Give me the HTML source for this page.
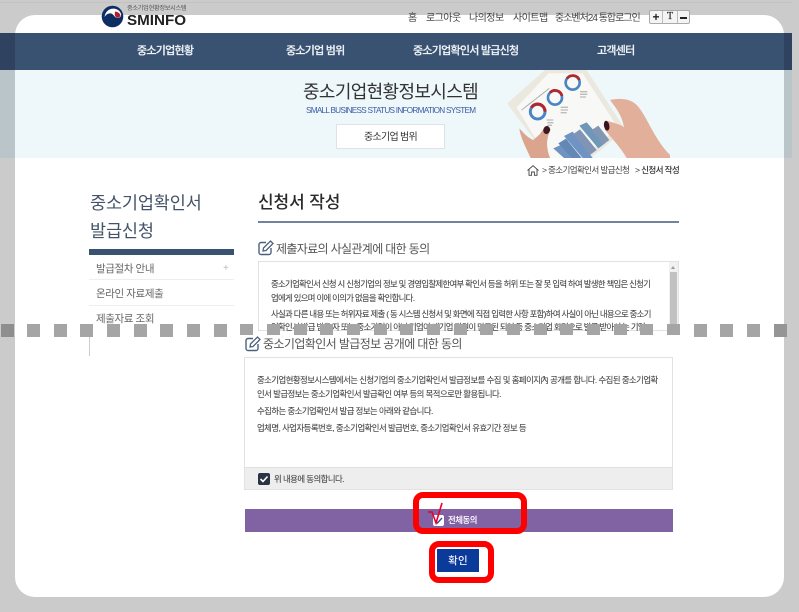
<!DOCTYPE html>
<html lang="ko">
<head>
<meta charset="utf-8">
<title>SMINFO</title>
<style>
html,body{margin:0;padding:0;background:#cbcbcb}
body{width:799px;height:612px;position:relative;overflow:hidden;font-family:"Liberation Sans","Noto Sans CJK KR",sans-serif;color:#333}
#w{position:absolute;left:0;top:0;width:799px;height:612px;background:#cbcbcb;filter:blur(.3px);overflow:hidden}
.a{position:absolute;white-space:nowrap;line-height:1}
.b{position:absolute}
.nav{color:#eef2f6;font-size:11px;font-weight:500;top:46px;letter-spacing:-.75px;-webkit-text-stroke:.2px #eef2f6}
.top{top:14px;font-size:10px;color:#444;letter-spacing:-.55px}
.t{font-size:8.4px;color:#444;letter-spacing:-.53px;-webkit-text-stroke:.1px #555}
.t1{letter-spacing:-.68px}
.side{font-size:10.5px;color:#666;letter-spacing:-.4px;left:96px}
.h{font-size:12px;color:#555;letter-spacing:-.65px}
.sq{position:absolute;top:324px;width:13px;height:13px;background:#a5a5a5}
</style>
</head>
<body>
<div id="w">
<div class="b" style="left:0;top:2px;width:792px;height:1px;background:#c2c2c2"></div>
<div class="b" style="left:15px;top:15px;width:769px;height:582px;background:#fff;border-radius:20px"></div>

<div class="b" style="left:0;top:70px;width:15px;height:88px;background:#b9c5c8"></div>
<div class="b" style="left:784px;top:70px;width:8px;height:88px;background:#b9c5c8"></div>
<div class="b" style="left:15px;top:70px;width:769px;height:88px;background:#eef7fa"></div>
<div class="b" style="left:0;top:33px;width:792px;height:37px;background:#2f4361"></div>
<div class="b" style="left:15px;top:33px;width:769px;height:37px;background:#3a5272"></div>

<!-- logo -->
<svg class="b" style="left:101px;top:5px" width="23" height="23" viewBox="0 0 23 23">
<circle cx="11.5" cy="11.5" r="10.8" fill="#0e2e63"/>
<path d="M3.6 12C4 7 8 3.4 12.5 3.6C16.5 3.8 19.6 6.2 20.2 9.6C20 12 18 13.4 15.6 12.8C13 12 12.6 8.8 9.6 8.4C7 8.2 5 9.6 3.6 12Z" fill="#fff"/>
<path d="M14 6.6C16.4 6.4 18.6 8 19.4 10.2C19 12.4 17 13.2 15.4 12.4C13.6 11.4 13.6 8.8 14 6.6Z" fill="#b3202c"/>
</svg>
<div class="a" style="left:127px;top:6px;font-size:6.2px;color:#555;letter-spacing:-.3px">중소기업현황정보시스템</div>
<div class="a" style="left:127px;top:13px;font-size:15.2px;font-weight:700;color:#222;letter-spacing:0">SMINFO</div>

<!-- top links -->
<div class="a top" style="left:408px">홈</div>
<div class="a top" style="left:426px">로그아웃</div>
<div class="a top" style="left:469px">나의정보</div>
<div class="a top" style="left:513px">사이트맵</div>
<div class="a top" style="left:555px;letter-spacing:-1px">중소벤처24 통합로그인</div>
<div class="b" style="left:649px;top:10px;width:41px;height:14px;border:1px solid #aaa;border-radius:2px;background:#f4f4f4;box-sizing:border-box"></div>
<div class="b" style="left:662px;top:11px;width:1px;height:12px;background:#bbb"></div>
<div class="b" style="left:677px;top:11px;width:1px;height:12px;background:#bbb"></div>
<div class="a" style="left:650px;top:11px;font-size:12px;font-weight:700;color:#222;width:12px;text-align:center">+</div>
<div class="a" style="left:663px;top:12px;font-size:10px;color:#222;font-family:'Liberation Serif',serif;width:14px;text-align:center;-webkit-text-stroke:.2px #222">T</div>
<div class="b" style="left:680px;top:17px;width:7px;height:2px;background:#222"></div>

<!-- nav -->
<div class="a nav" style="left:137px">중소기업현황</div>
<div class="a nav" style="left:286px">중소기업 범위</div>
<div class="a nav" style="left:413px">중소기업확인서 발급신청</div>
<div class="a nav" style="left:597px">고객센터</div>

<!-- banner -->
<div class="a" style="left:303px;top:83px;font-size:18px;color:#333;letter-spacing:-.65px">중소기업현황정보시스템</div>
<div class="a" style="left:306px;top:107px;font-size:8.2px;color:#3a5ba5;letter-spacing:-.73px">SMALL BUSINESS STATUS INFORMATION SYSTEM</div>
<div class="b" style="left:336px;top:124px;width:109px;height:25px;background:#fff;border:1px solid #dfe3e6;box-sizing:border-box"></div>
<div class="a" style="left:336px;top:133px;width:109px;text-align:center;font-size:10px;color:#333;letter-spacing:-.7px">중소기업 범위</div>

<!-- tablet image -->
<svg class="b" style="left:490px;top:70px" width="180" height="88" viewBox="0 30 540 264">
<path d="M52 130L165 30H290L405 208L335 268L300 294H175L130 235L58 140Z" fill="#ebe8df"/>
<path d="M80 142L175 40H278L385 205L320 252L298 294H180L130 225Z" fill="#f8f8f6"/>
<circle cx="143" cy="155" r="22" fill="none" stroke="#4a86c5" stroke-width="9"/>
<path d="M124 143A22 22 0 0 1 165 155" fill="none" stroke="#b5252e" stroke-width="9"/>
<circle cx="195" cy="113" r="21" fill="none" stroke="#4a86c5" stroke-width="8"/>
<path d="M180 98A21 21 0 0 1 216 108" fill="none" stroke="#b5252e" stroke-width="8"/>
<circle cx="248" cy="68" r="21" fill="none" stroke="#4a86c5" stroke-width="8"/>
<path d="M231 56A21 21 0 0 1 268 60" fill="none" stroke="#b5252e" stroke-width="8"/>
<path d="M95 150L178 85" stroke="#888" stroke-width="3" stroke-dasharray="2 1"/>
<path d="M170 180H190M172 188H190M172 196H186M212 142H234M212 150H234M212 158H230M270 95H292M270 103H292M270 111H288" stroke="#bbb" stroke-width="4"/>
<path d="M190 265L212 255L250 294H222Z" fill="#6f93c2"/>
<path d="M205 250L228 236L275 294H246Z" fill="#6488b6"/>
<path d="M222 228L248 215L308 294H278Z" fill="#6f93c2"/>
<path d="M250 222L270 208L320 270L300 285Z" fill="#8094b5"/>
<path d="M268 197L290 187L345 250L325 265Z" fill="#6e97b8"/>
<path d="M305 210L325 197L358 240L338 255Z" fill="#8297b3"/>
<path d="M88 205C92 235 108 262 122 294H180C170 268 166 240 182 208C172 195 160 205 150 222L130 240C112 232 100 218 88 205Z" fill="#dba48d"/>
<ellipse cx="170" cy="210" rx="10" ry="12" fill="#3e1820" transform="rotate(15 170 210)"/>
<path d="M360 120C385 114 420 114 440 135C470 165 490 235 540 285V294H410C390 260 365 235 345 210C340 190 350 180 360 185C375 190 395 195 402 202C396 165 375 140 360 120Z" fill="#e2b09a"/>
<ellipse cx="350" cy="197" rx="8" ry="15" fill="#3a1520" transform="rotate(-10 350 197)"/>
</svg>

<!-- breadcrumb -->
<svg class="b" style="left:527px;top:165px" width="12" height="11" viewBox="0 0 12 11"><path d="M.5 5.5L6 .7L11.5 5.5M2 4.5V10.3H4.6V7H7.4V10.3H10V4.5" fill="none" stroke="#444" stroke-width=".9"/></svg>
<div class="a" style="left:542px;top:166px;font-size:8.6px;color:#444;letter-spacing:-.68px">&gt; 중소기업확인서 발급신청</div>
<div class="a" style="left:635px;top:166px;font-size:8.6px;font-weight:500;color:#333;letter-spacing:-.65px">&gt; 신청서 작성</div>

<!-- sidebar -->
<div class="a" style="left:90px;top:195px;font-size:17.5px;color:#445468;letter-spacing:-.15px">중소기업확인서</div>
<div class="a" style="left:90px;top:223px;font-size:17.5px;color:#445468;letter-spacing:-.15px">발급신청</div>
<div class="b" style="left:89px;top:249px;width:145px;height:6px;background:#3a5272"></div>
<div class="a side" style="top:264px">발급절차 안내</div>
<div class="a" style="left:223px;top:264px;font-size:10px;color:#bbb">+</div>
<div class="b" style="left:89px;top:279px;width:145px;height:1px;background:#eee"></div>
<div class="a side" style="top:289px">온라인 자료제출</div>
<div class="b" style="left:89px;top:305px;width:145px;height:1px;background:#eee"></div>
<div class="a side" style="top:314px">제출자료 조회</div>
<div class="b" style="left:89px;top:330px;width:1px;height:26px;background:#c8ced4"></div>

<!-- title -->
<div class="a" style="left:258px;top:194px;font-size:17px;font-weight:500;color:#2a2a2a;letter-spacing:-.1px">신청서 작성</div>
<div class="b" style="left:258px;top:221px;width:421px;height:2px;background:#72839b"></div>

<!-- section 1 -->
<svg class="b" style="left:258px;top:240px" width="16" height="16" viewBox="0 0 16 16"><path d="M8 2.5H3A2 2 0 0 0 1 4.5V12.5A2 2 0 0 0 3 14.5H11A2 2 0 0 0 13 12.5V8" fill="none" stroke="#4a617f" stroke-width="1.4"/><path d="M5.5 8L12.5 1L15 3.5L8 10.5L5 11Z" fill="none" stroke="#4a617f" stroke-width="1.3"/></svg>
<div class="a h" style="left:276px;top:243px">제출자료의 사실관계에 대한 동의</div>
<div class="b" style="left:258px;top:261px;width:421px;height:70px;border:1px solid #e2e2e2;box-sizing:border-box;background:#fff"></div>
<div class="b" style="left:669px;top:262px;width:9px;height:68px;background:#f1f1f1"></div>
<div class="b" style="left:670px;top:272px;width:7px;height:58px;background:#c1c1c1"></div>
<div class="b" style="left:671px;top:266px;width:0;height:0;border:2.5px solid transparent;border-bottom:3px solid #999;border-top:0"></div>
<div class="a t t1" style="left:271px;top:280px">중소기업확인서 신청 시 신청기업의 정보 및 경영입찰제한여부 확인서 등을 허위 또는 잘 못 입력 하여 발생한 책임은 신청기</div>
<div class="a t t1" style="left:271px;top:294px">업에게 있으며 이에 이의가 없음을 확인합니다.</div>
<div class="a t t1" style="left:271px;top:310px">사실과 다른 내용 또는 허위자료 제출 ( 동 시스템 신청서 및 화면에 직접 입력한 사항 포함)하여 사실이 아닌 내용으로 중소기</div>
<div class="a t t1" style="left:271px;top:323px">업확인서 발급 받을 자 또는 중소기업이 아닌 기업이 대기업 지원이 만료된 되어 등 중소기업 화면으로 발급 받아서 는 기업</div>

<!-- dashes -->
<div class="sq" style="left:1px;background:#8e8e8e"></div>
<div class="sq" style="left:27px"></div><div class="sq" style="left:54px"></div><div class="sq" style="left:80px"></div>
<div class="sq" style="left:107px"></div><div class="sq" style="left:134px"></div><div class="sq" style="left:160px"></div>
<div class="sq" style="left:187px"></div><div class="sq" style="left:214px"></div><div class="sq" style="left:240px"></div>
<div class="sq" style="left:267px"></div><div class="sq" style="left:294px"></div><div class="sq" style="left:320px"></div>
<div class="sq" style="left:347px"></div><div class="sq" style="left:374px"></div><div class="sq" style="left:400px"></div>
<div class="sq" style="left:427px"></div><div class="sq" style="left:454px"></div><div class="sq" style="left:480px"></div>
<div class="sq" style="left:507px"></div><div class="sq" style="left:534px"></div><div class="sq" style="left:560px"></div>
<div class="sq" style="left:587px"></div><div class="sq" style="left:614px"></div><div class="sq" style="left:640px"></div>
<div class="sq" style="left:667px"></div><div class="sq" style="left:694px"></div><div class="sq" style="left:720px"></div>
<div class="sq" style="left:747px"></div><div class="sq" style="left:774px;background:#959595"></div>

<!-- section 2 -->
<div class="b" style="left:240px;top:335px;width:440px;height:22px;background:#fff"></div>
<svg class="b" style="left:245px;top:336px" width="16" height="16" viewBox="0 0 16 16"><path d="M8 2.5H3A2 2 0 0 0 1 4.5V12.5A2 2 0 0 0 3 14.5H11A2 2 0 0 0 13 12.5V8" fill="none" stroke="#4a617f" stroke-width="1.4"/><path d="M5.5 8L12.5 1L15 3.5L8 10.5L5 11Z" fill="none" stroke="#4a617f" stroke-width="1.3"/></svg>
<div class="a h" style="left:263px;top:338px;letter-spacing:-.6px">중소기업확인서 발급정보 공개에 대한 동의</div>
<div class="b" style="left:244px;top:357px;width:429px;height:133px;border:1px solid #e2e2e2;box-sizing:border-box;background:#fff"></div>
<div class="a t" style="left:257px;top:376px">중소기업현황정보시스템에서는 신청기업의 중소기업확인서 발급정보를 수집 및 홈페이지內 공개를 합니다. 수집된 중소기업확</div>
<div class="a t" style="left:257px;top:390px">인서 발급정보는 중소기업확인서 발급확인 여부 등의 목적으로만 활용됩니다.</div>
<div class="a t" style="left:257px;top:407px">수집하는 중소기업확인서 발급 정보는 아래와 같습니다.</div>
<div class="a t" style="left:257px;top:424px">업체명, 사업자등록번호, 중소기업확인서 발급번호, 중소기업확인서 유효기간 정보 등</div>
<div class="b" style="left:245px;top:467px;width:427px;height:22px;background:#eee;border-top:1px solid #e0e0e0;box-sizing:border-box"></div>
<div class="b" style="left:258px;top:473px;width:12px;height:12px;background:#2a3344;border-radius:2px"></div>
<svg class="b" style="left:258px;top:473px" width="12" height="12" viewBox="0 0 12 12"><path d="M2.5 6L5 8.5L9.5 3.5" fill="none" stroke="#fff" stroke-width="1.6"/></svg>
<div class="a t" style="left:274px;top:475px;color:#444">위 내용에 동의합니다.</div>

<!-- purple bar -->
<div class="b" style="left:245px;top:509px;width:428px;height:23px;background:#8163a4"></div>
<div class="b" style="left:433px;top:515px;width:11px;height:11px;background:#fff;border-radius:2px"></div>
<svg class="b" style="left:433px;top:515px" width="11" height="11" viewBox="0 0 11 11"><path d="M2 5.5L4.5 8L9 3" fill="none" stroke="#3a4fa0" stroke-width="1.4"/></svg>
<div class="a" style="left:448px;top:516px;font-size:8.4px;font-weight:700;color:#f3eff7;letter-spacing:-.45px">전체동의</div>
<svg class="b" style="left:425px;top:500px" width="22" height="26" viewBox="0 0 22 26"><path d="M3 12H7L11 23L17 3" fill="none" stroke="#e8002a" stroke-width="1.6"/></svg>
<div class="b" style="left:413px;top:492px;width:102px;height:30px;border:6px solid #ff0000;border-radius:10px"></div>

<!-- confirm -->
<div class="b" style="left:437px;top:549px;width:42px;height:23px;background:#0a3a9a"></div>
<div class="a" style="left:437px;top:556px;width:42px;text-align:center;font-size:10.5px;font-weight:500;color:#eef;letter-spacing:.2px">확인</div>
<div class="b" style="left:429px;top:541px;width:53px;height:30px;border:6px solid #ff0000;border-radius:10px"></div>
</div>
</body>
</html>
